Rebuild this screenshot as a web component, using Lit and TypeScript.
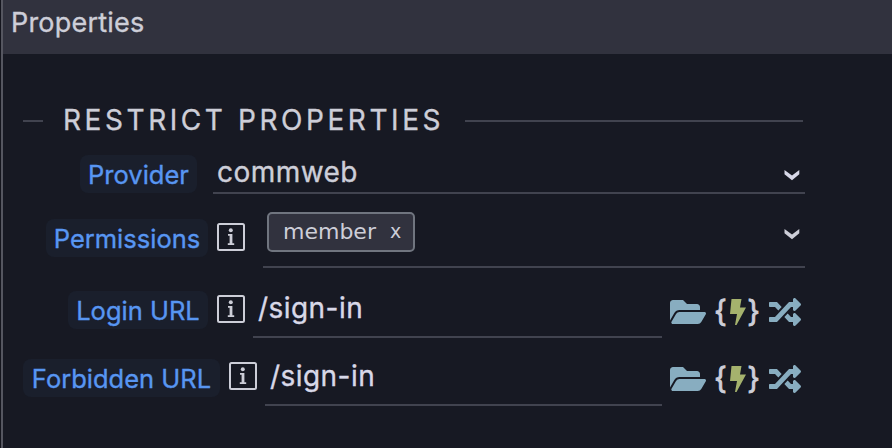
import { LitElement, html, css, svg } from "lit";
import { customElement } from "lit/decorators.js";

const chevron = html`<svg class="chevron" viewBox="0 0 16 11"><path d="M.5 0L8 5.4 15.3 0V4.2L8 10.2.5 4.2Z" /></svg>`;

const info = html`<svg class="info" viewBox="0 0 28 28">
  <rect x="1" y="1" width="26" height="26" rx="1.5" fill="none" stroke="currentColor" stroke-width="2" />
  <circle cx="13.8" cy="7.3" r="2" />
  <path d="M11 11H15.4V20.2H17.2V22H10.8V20.2H12.6V12.8H11Z" />
</svg>`;

const folder = svg`<path d="M572.694 292.093L500.27 416.248A63.997 63.997 0 0 1 444.989 448H45.025c-18.523 0-30.064-20.093-20.731-36.093l72.424-124.155A64 64 0 0 1 152 256h399.964c18.523 0 30.064 20.093 20.73 36.093zM152 224h328v-48c0-26.51-21.49-48-48-48H272l-64-64H48C21.49 64 0 85.49 0 112v278.046l69.077-118.418C86.214 242.25 117.989 224 152 224z" />`;

const shuffle = svg`<path d="M504.971 359.029c9.373 9.373 9.373 24.569 0 33.941l-80 79.984c-15.01 15.01-40.971 4.49-40.971-16.971V416h-58.785a12.004 12.004 0 0 1-8.773-3.812l-70.556-75.596 53.333-57.143L352 336h32v-39.981c0-21.438 25.943-31.998 40.971-16.971l80 79.981zM12 176h84l52.781 56.551 53.333-57.143-70.556-75.596A11.999 11.999 0 0 0 122.785 96H12c-6.627 0-12 5.373-12 12v56c0 6.627 5.373 12 12 12zm372 0v39.984c0 21.46 25.961 31.98 40.971 16.971l80-79.984c9.373-9.373 9.373-24.569 0-33.941l-80-79.981C409.943 24.021 384 34.582 384 56.019V96h-58.785a12.004 12.004 0 0 0-8.773 3.812L96 336H12c-6.627 0-12 5.373-12 12v56c0 6.627 5.373 12 12 12h110.785c3.326 0 6.503-1.381 8.773-3.812L352 176h32z" />`;

const actions = html`<div class="actions">
  <svg class="folder" viewBox="0 0 576 512">${folder}</svg>
  <span class="expr">
    <span>{</span>
    <svg class="bolt" viewBox="0 0 16 26"><path d="M1.5 0H11.5L10 8.5H16L6.5 26H5L7 15H0Z" /></svg>
    <span>}</span>
  </span>
  <svg class="shuffle" viewBox="0 0 512 512">${shuffle}</svg>
</div>`;

@customElement("app-root")
export class AppRoot extends LitElement {
  static styles = css`
    :host {
      display: block;
      box-sizing: border-box;
      height: 448px;
      overflow: hidden;
      background: #171923;
      border-left: 1px solid #14151d;
      color: #cdced8;
      font-family: Inter, sans-serif;
      -webkit-text-stroke: 0.35px currentColor;
    }
    * { box-sizing: border-box; }
    svg { display: block; flex: none; fill: currentColor; }
    .panel { height: 448px; border-left: 2px solid #555660; }
    .title {
      height: 54px;
      padding-left: 8px;
      background: #31323e;
      font-size: 27px;
      line-height: 45px;
      letter-spacing: 0.2px;
    }
    .body { padding-left: 20px; width: 802px; }
    .legend { display: flex; align-items: center; margin-top: 47px; height: 38px; width: 780px; }
    .legend i { height: 2px; background: #41434f; margin-top: 2px; }
    .legend .pre { width: 20px; }
    .legend .post { flex: none; width: 338px; margin-left: auto; }
    .legend span { font-size: 28px; line-height: 36px; letter-spacing: 3.57px; margin: -1px 0 0 20px; white-space: nowrap; }
    .row { display: flex; align-items: flex-start; white-space: nowrap; }
    .provider { margin-top: 16px; height: 64px; padding-left: 57px; }
    .permissions { height: 72px; padding-left: 23px; }
    .login { height: 68px; padding-left: 45px; }
    .label {
      flex: none;
      height: 38px;
      line-height: 40px;
      border-radius: 8px;
      background: #1a1f2c;
      color: #5896f2;
      font-size: 25.5px;
      text-align: center;
    }
    .provider .label { width: 117px; }
    .permissions .label { width: 162px; }
    .login .label { width: 140px; }
    .forbidden .label { width: 197px; }
    .info { width: 28px; height: 28px; margin: 4px 0 0 9px; }
    .forbidden .info { margin-top: 3px; }
    .field { display: flex; border-bottom: 2px solid #41434f; font-size: 28px; letter-spacing: 0.45px; }
    .provider .field { width: 592px; height: 39px; margin-left: 16px; padding-left: 4px; line-height: 35px; }
    .permissions .field { width: 542px; height: 56px; margin: -7px 0 0 18px; padding-left: 4px; }
    .login .field, .forbidden .field { height: 47px; padding-left: 5px; line-height: 35px; margin-left: 8px; color: #d8d8e8; }
    .login .field { width: 409px; }
    .forbidden .field { width: 397px; }
    .chevron { width: 16px; height: 11px; margin: 15px 5px 0 auto; color: #d8d8e8; }
    .permissions .chevron { margin-top: 17px; color: #cdced8; }
    .chip {
      display: flex;
      width: 148px;
      height: 40px;
      border: 2px solid #70757f;
      border-radius: 5px;
      background: #31323e;
      font: 22px/35px "DejaVu Sans", sans-serif;
      letter-spacing: 0;
      padding-left: 14px;
      -webkit-text-stroke: 0;
    }
    .chip .name { width: 92px; }
    .chip .x { margin-left: 15px; font-size: 19px; line-height: 34px; }
    .actions { display: flex; margin: 5px 0 0 8px; color: #88adc0; height: 32px; }
    .forbidden .actions { margin-top: 4px; }
    .folder { width: 36px; height: 32px; }
    .expr { display: flex; width: 46px; margin: 0 9px 0 8px; color: #cdced8; font-size: 30px; line-height: 30px; justify-content: space-between; -webkit-text-stroke: 0.8px currentColor; }
    .bolt { width: 16px; height: 26px; margin: 3px -1px 0 0; color: #a5b26d; }
    .shuffle { width: 32px; height: 32px; }
  `;

  render() {
    return html`<div class="panel">
      <div class="title">Properties</div>
      <div class="body">
        <div class="legend"><i class="pre"></i><span>RESTRICT PROPERTIES</span><i class="post"></i></div>
        <div class="row provider">
          <div class="label">Provider</div>
          <div class="field"><span>commweb</span>${chevron}</div>
        </div>
        <div class="row permissions">
          <div class="label">Permissions</div>
          ${info}
          <div class="field">
            <div class="chip"><span class="name">member</span><span class="x">x</span></div>
            ${chevron}
          </div>
        </div>
        <div class="row login">
          <div class="label">Login URL</div>
          ${info}
          <div class="field"><span>/sign-in</span></div>
          ${actions}
        </div>
        <div class="row forbidden">
          <div class="label">Forbidden URL</div>
          ${info}
          <div class="field"><span>/sign-in</span></div>
          ${actions}
        </div>
      </div>
    </div>`;
  }
}
